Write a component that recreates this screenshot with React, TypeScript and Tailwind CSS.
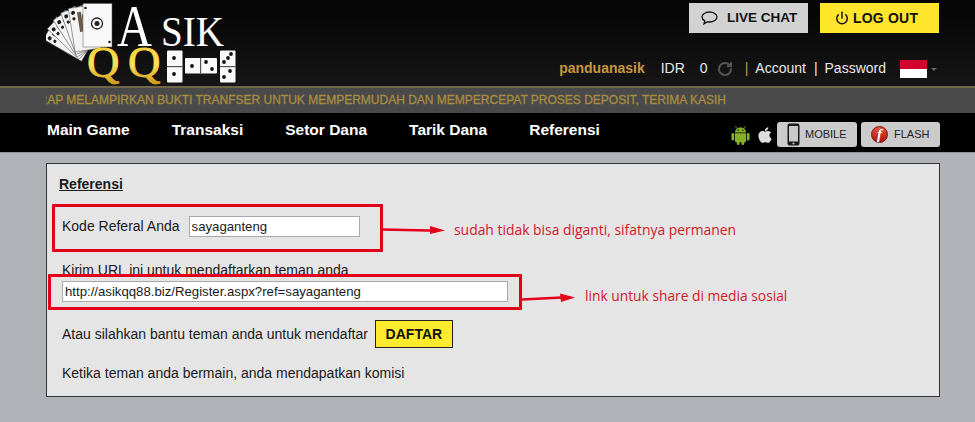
import { Power, RotateCw } from "lucide-react";
import { FaApple } from "react-icons/fa";

const navItems = ["Main Game", "Transaksi", "Setor Dana", "Tarik Dana", "Referensi"];

function Pip({ x, y }: { x: number; y: number }) {
  return <circle cx={x} cy={y} r="1.9" fill="#111" />;
}

// one card of the fan, turned around the point where the hand holds it
function FanCard({ angle, face }: { angle: number; face: string }) {
  return (
    <g transform={`rotate(${angle} 88 50)`}>
      <rect x="75" y="6" width="26" height="44" fill="#f4f4f4" stroke="#444" strokeWidth="0.5" />
      <circle cx="79" cy="11" r="2" fill="#1c1c1c" />
      <circle cx="79" cy="17" r="1.6" fill="#1c1c1c" />
      <rect x="83" y="11" width="4" height="20" fill={face} />
      <rect x="87" y="14" width="3" height="14" fill="#8a7a5c" />
    </g>
  );
}

function Logo() {
  return (
    <svg width="192" height="86" viewBox="46 0 192 86" className="shrink-0">
      <defs>
        <linearGradient id="gold" x1="0" y1="0" x2="0" y2="1">
          <stop offset="0" stopColor="#f4c92a" />
          <stop offset="0.55" stopColor="#ffe25a" />
          <stop offset="1" stopColor="#c98f14" />
        </linearGradient>
      </defs>
      <FanCard angle={-60} face="#3a3a3a" />
      <FanCard angle={-46} face="#c23a2c" />
      <FanCard angle={-33} face="#3a4a7a" />
      <FanCard angle={-20} face="#a8863c" />
      <FanCard angle={-9} face="#6d5a4a" />
      <rect x="83" y="3.500" width="29" height="43.500" fill="#f8f8f8" stroke="#555" strokeWidth="0.5" />
      <circle cx="85.500" cy="8" r="1.300" fill="#222" />
      <circle cx="109.500" cy="42" r="1.300" fill="#222" />
      <circle cx="97" cy="23.500" r="5.500" fill="none" stroke="#222" strokeWidth="1.300" />
      <circle cx="97" cy="23.500" r="2.500" fill="#222" />
      <text x="117" y="45.500" fontFamily="'Liberation Serif', serif" fontSize="60" fill="#fff" textLength="35" lengthAdjust="spacingAndGlyphs">A</text>
      <text x="161" y="45.500" fontFamily="'Liberation Serif', serif" fontSize="42" fill="#fff" textLength="63" lengthAdjust="spacingAndGlyphs">SIK</text>
      <text x="87" y="77" fontFamily="'Liberation Serif', serif" fontSize="45" fill="url(#gold)" stroke="url(#gold)" strokeWidth="0.8">Q</text>
      <text x="128" y="77" fontFamily="'Liberation Serif', serif" fontSize="45" fill="url(#gold)" stroke="url(#gold)" strokeWidth="0.8">Q</text>
      {/* dominoes */}
      <rect x="167" y="50.500" width="15.500" height="32" rx="1" fill="#fafafa" />
      <rect x="167" y="66" width="15.500" height="1.200" fill="#555" />
      <Pip x={174} y={58} />
      <Pip x={174} y={74} />
      <rect x="185" y="58" width="32" height="15.500" rx="1" fill="#fafafa" />
      <rect x="200" y="58" width="1.200" height="15.500" fill="#555" />
      <Pip x={192} y={66} />
      <Pip x={206} y={62} />
      <Pip x={212} y={69} />
      <rect x="220" y="50.500" width="15.500" height="32" rx="1" fill="#fafafa" />
      <rect x="220" y="66" width="15.500" height="1.200" fill="#555" />
      <Pip x={231} y={54} />
      <Pip x={228} y={58} />
      <Pip x={224} y={62} />
      <Pip x={230} y={71} />
      <Pip x={224} y={77} />
    </svg>
  );
}

function ChatIcon() {
  return (
    <svg width="17" height="14" viewBox="0 0 17 14" fill="none" stroke="#111" strokeWidth="1.300">
      <path d="M8.500 1C4.400 1 1 3.200 1 6c0 1.600 1.100 3 2.800 3.900L3 12.800l3.700-2c.6.100 1.200.200 1.800.200 4.100 0 7.500-2.200 7.500-5S12.600 1 8.500 1z" />
    </svg>
  );
}

function AndroidIcon() {
  return (
    <svg width="19" height="20" viewBox="0 0 19 20" fill="#86b02a">
      <path d="M4 7.500C4 4.500 6.400 2.500 9.500 2.500S15 4.500 15 7.500z" />
      <path d="M5.800 3.500L4.500 1.200M13.200 3.500l1.300-2.300" stroke="#86b02a" strokeWidth="0.8" />
      <circle cx="7.200" cy="5.200" r="0.700" fill="#000" />
      <circle cx="11.800" cy="5.200" r="0.700" fill="#000" />
      <path d="M4 8.300h11v7.700a1.200 1.200 0 0 1-1.200 1.200H5.200A1.200 1.200 0 0 1 4 16z" />
      <rect x="0.500" y="8" width="2.700" height="7.500" rx="1.350" />
      <rect x="15.800" y="8" width="2.700" height="7.500" rx="1.350" />
      <rect x="5.800" y="16" width="2.700" height="4" rx="1.350" />
      <rect x="10.500" y="16" width="2.700" height="4" rx="1.350" />
    </svg>
  );
}

function PhoneIcon() {
  return (
    <svg width="13" height="23" viewBox="0 0 13 23">
      <rect x="0.500" y="0.500" width="12" height="22" rx="2" fill="#1a1a1a" />
      <rect x="2" y="3" width="9" height="15.500" fill="#c9c9c9" />
      <circle cx="6.500" cy="20.500" r="1" fill="#c9c9c9" />
    </svg>
  );
}

function FlashBall() {
  return (
    <div className="flex h-[17px] w-[17px] items-center justify-center rounded-full border border-[#7d0f0f] bg-gradient-to-b from-[#e8503a] to-[#a80f0f] font-['Liberation_Serif',serif] text-[15px] font-bold italic leading-none text-white">
      f
    </div>
  );
}

export default function App() {
  return (
    <div className="relative h-[422px] w-[975px] overflow-hidden bg-[#b0b3b7] font-['Liberation_Sans',Arial,sans-serif] text-[14px] text-[#1a1a1a]">
      {/* Header */}
      <div className="flex h-[86px] justify-between bg-gradient-to-b from-[#050505] to-[#161616] pl-[46px] pr-[36px]">
        <Logo />
        <div className="flex flex-col items-end">
          <div className="mt-[3px] flex gap-[12px]">
            <button className="flex h-[30px] w-[119px] items-center bg-[#d2d2d2] pl-[12px] text-[13.500px] font-bold text-[#111]">
              <ChatIcon />
              <span className="ml-[9px]">LIVE CHAT</span>
            </button>
            <button className="flex h-[30px] w-[119px] items-center bg-[#ffe52c] pl-[15px] text-[14px] font-bold tracking-[0.2px] text-[#111]">
              <Power size={14} strokeWidth={2.500} />
              <span className="ml-[4px]">LOG OUT</span>
            </button>
          </div>
          <div className="mt-[25px] flex items-center text-[14px] text-[#e8e8e8]">
            <span className="font-bold text-[#c8973c]">panduanasik</span>
            <span className="ml-[16px]">IDR</span>
            <span className="ml-[15px]">0</span>
            <RotateCw size={16} strokeWidth={3} className="ml-[9px] text-[#555]" />
            <span className="ml-[12px] text-[#c8973c]">|</span>
            <span className="ml-[7px]">Account</span>
            <span className="ml-[8px]">|</span>
            <span className="ml-[7px]">Password</span>
            <div className="ml-[14px] flex h-[18px] w-[27px] flex-col">
              <div className="h-[9px] bg-[#d2042d]" />
              <div className="h-[9px] bg-white" />
            </div>
            <div className="ml-[4px] mr-[2px] mt-[2px] h-0 w-0 border-x-[3.500px] border-t-[3.500px] border-x-transparent border-t-[#666]" />
          </div>
        </div>
      </div>

      {/* Ticker */}
      <div className="flex h-[27px] items-center border-t-2 border-[#6f6748] bg-[#4a4a4a] pb-[2px] pl-[46px] pr-[249px]">
        <div className="flex flex-1 justify-end overflow-hidden whitespace-nowrap text-[12px] text-[#a98c3f] [-webkit-text-stroke:0.3px_#a98c3f]">
          <span className="shrink-0">HARAP MELAMPIRKAN BUKTI TRANFSER UNTUK MEMPERMUDAH DAN MEMPERCEPAT PROSES DEPOSIT, TERIMA KASIH</span>
        </div>
      </div>

      {/* Nav */}
      <div className="flex h-[40px] items-start justify-between border-b border-[#8f9194] bg-black pl-[47px] pr-[35px]">
        <div className="mt-[5px] flex gap-[42px] text-[15.500px] font-bold text-white">
          {navItems.map((item) => (
            <span key={item}>{item}</span>
          ))}
        </div>
        <div className="mt-[9px] flex items-center">
          <AndroidIcon />
          <FaApple size={18} className="ml-[6px] text-[#dedede]" />
          <button className="ml-[3px] flex h-[25px] w-[80px] items-center rounded-[3px] bg-[#cbcbcb] pl-[10px] text-[11px] text-[#222]">
            <PhoneIcon />
            <span className="ml-[5px]">MOBILE</span>
          </button>
          <button className="ml-[4px] flex h-[25px] w-[79px] items-center rounded-[3px] bg-[#cbcbcb] pl-[10px] text-[11px] text-[#222]">
            <FlashBall />
            <span className="ml-[6px]">FLASH</span>
          </button>
        </div>
      </div>

      {/* Panel */}
      <div className="ml-[46px] mt-[10px] h-[234px] w-[894px] border border-[#333] bg-[#e5e5e5] pl-[12px]">
        <div className="mt-[10px] text-[14px] font-bold underline">Referensi</div>
        <div className="mt-[21px] flex items-center pl-[3px]">
          <span>Kode Referal Anda</span>
          <input
            readOnly
            value="sayaganteng"
            className="ml-[9px] h-[21px] w-[171px] border border-[#aaa] bg-white px-[2px] text-[13.200px] text-[#1a1a1a]"
          />
        </div>
        <div className="mt-[23px] pl-[3px] leading-[20px]">Kirim URL ini untuk mendaftarkan teman anda</div>
        <input
          readOnly
          value="http://asikqq88.biz/Register.aspx?ref=sayaganteng"
          className="ml-[3px] mt-[1px] block h-[21px] w-[446px] border border-[#aaa] bg-white px-[2px] text-[13.200px] text-[#1a1a1a]"
        />
        <div className="mt-[18px] flex items-center pl-[3px]">
          <span>Atau silahkan bantu teman anda untuk mendaftar</span>
          <button className="ml-[7px] h-[28px] w-[78px] border border-[#222] bg-[#ffea2c] text-[14px] font-bold text-[#111]">
            DAFTAR
          </button>
        </div>
        <div className="mt-[15px] pl-[3px]">Ketika teman anda bermain, anda mendapatkan komisi</div>
      </div>

      {/* Annotations drawn on top of the page */}
      <div className="absolute left-[52px] top-[204px] h-[48px] w-[331px] rounded-[1px] border-[3px] border-[#e2001a]" />
      <div className="absolute left-[48px] top-[274px] h-[36px] w-[474px] rounded-[1px] border-[3px] border-[#e2001a]" />
      <svg className="absolute left-[380px] top-[220px]" width="70" height="20" viewBox="0 0 70 20">
        <path d="M2 9.500L50 10.500" stroke="#e2001a" strokeWidth="2.500" />
        <path d="M50 6L65 10.500L50 14z" fill="#e2001a" />
      </svg>
      <svg className="absolute left-[520px] top-[288px]" width="60" height="20" viewBox="0 0 60 20">
        <path d="M2 11.500L42 9.500" stroke="#e2001a" strokeWidth="2.500" />
        <path d="M40 5.500L55 9.500L41 14z" fill="#e2001a" />
      </svg>
      <div className="absolute left-[454px] top-[221px] font-['Open_Sans',sans-serif] text-[13.900px] leading-[18px] text-[#d4182c]">
        sudah tidak bisa diganti, sifatnya permanen
      </div>
      <div className="absolute left-[585px] top-[287px] font-['Open_Sans',sans-serif] text-[13.800px] leading-[18px] text-[#d4182c]">
        link untuk share di media sosial
      </div>
    </div>
  );
}
